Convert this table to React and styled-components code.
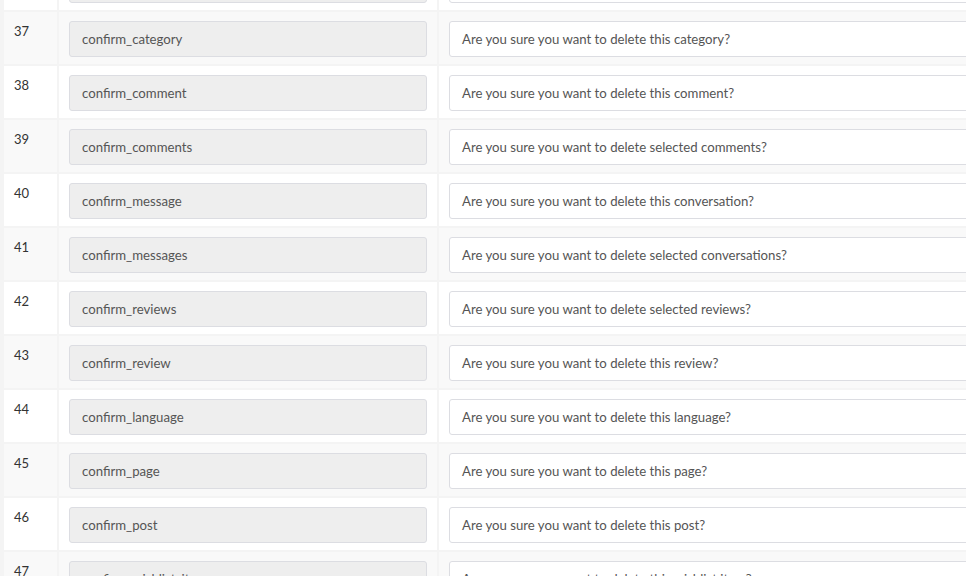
import styled, { createGlobalStyle } from "styled-components";

const GlobalStyle = createGlobalStyle`
  html, body {
    margin: 0;
    padding: 0;
    background: #ecf0f5;
    overflow: hidden;
  }
  body {
    font-family: "Lato", "Liberation Sans", sans-serif;
  }
`;

const Page = styled.div`
  width: 966px;
  height: 576px;
  overflow: hidden;
  background: #f4f4f4;
  padding-left: 4px;
  box-sizing: border-box;
`;

const Table = styled.div`
  display: grid;
  grid-template-columns: 53px 378px 1fr;
  gap: 2px;
  margin-top: -42px;
  width: 1000px;
  background: #f4f4f4;
`;

const Cell = styled.div`
  background: ${(p) => (p.$striped ? "#f9f9f9" : "#ffffff")};
  padding: 9px 10px 7px;
  height: 52px;
  box-sizing: border-box;
`;

const Num = styled(Cell)`
  font-size: 13px;
  color: #333;
  line-height: 20px;
  padding-top: 9px;
`;

const Field = styled.div`
  height: 36px;
  box-sizing: border-box;
  border: 1px solid #dcdde2;
  border-radius: 3px;
  background: ${(p) => (p.$disabled ? "#eeeeee" : "#ffffff")};
  color: #555;
  font-size: 13.2px;
  line-height: 34px;
  padding: 0 12px;
  white-space: nowrap;
  overflow: hidden;
`;

const rows = [
  [36, "confirm_ban", "Are you sure you want to ban this user?"],
  [37, "confirm_category", "Are you sure you want to delete this category?"],
  [38, "confirm_comment", "Are you sure you want to delete this comment?"],
  [39, "confirm_comments", "Are you sure you want to delete selected comments?"],
  [40, "confirm_message", "Are you sure you want to delete this conversation?"],
  [41, "confirm_messages", "Are you sure you want to delete selected conversations?"],
  [42, "confirm_reviews", "Are you sure you want to delete selected reviews?"],
  [43, "confirm_review", "Are you sure you want to delete this review?"],
  [44, "confirm_language", "Are you sure you want to delete this language?"],
  [45, "confirm_page", "Are you sure you want to delete this page?"],
  [46, "confirm_post", "Are you sure you want to delete this post?"],
  [47, "confirm_wishlist_item", "Are you sure you want to delete this wishlist item?"],
];

export default function App() {
  return (
    <Page>
      <GlobalStyle />
      <Table>
        {rows.map(([n, key, value]) => {
          const striped = n % 2 === 1;
          return [
            <Num key={n + "n"} $striped={striped}>{n}</Num>,
            <Cell key={n + "k"} $striped={striped}>
              <Field $disabled>{key}</Field>
            </Cell>,
            <Cell key={n + "v"} $striped={striped}>
              <Field>{value}</Field>
            </Cell>,
          ];
        })}
      </Table>
    </Page>
  );
}
